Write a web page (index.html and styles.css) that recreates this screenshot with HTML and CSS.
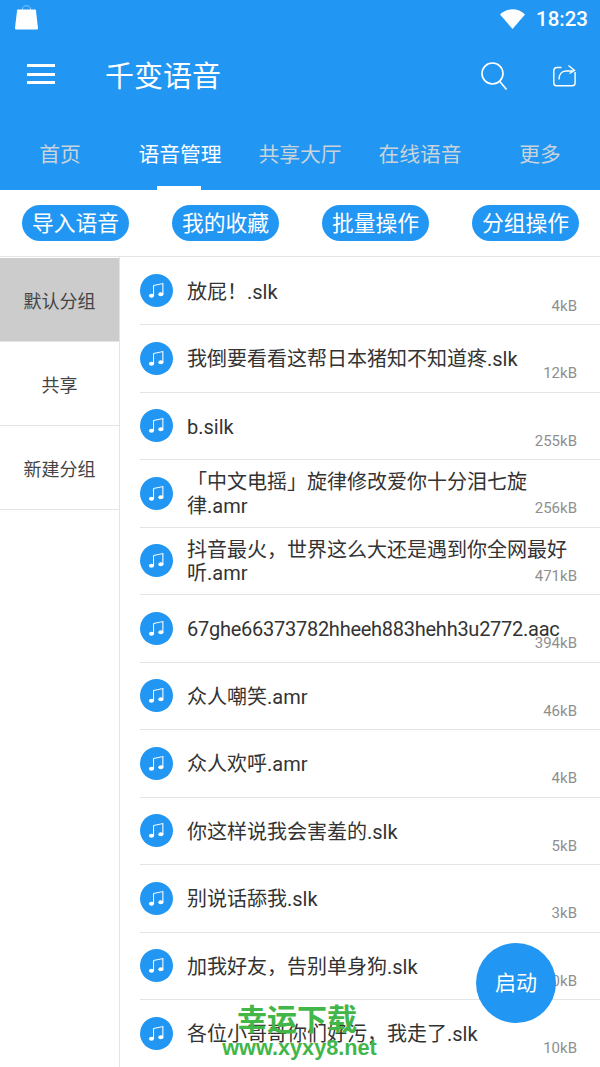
FILE: index.html
```html
<!DOCTYPE html>
<html lang="zh-CN">
<head>
	<meta charset="UTF-8">
	<title>千变语音</title>
	<link rel="stylesheet" href="styles.css">
</head>
<body>
	<div class="head">
		<div class="status">
			<svg class="bag" width="23" height="25" viewBox="0 0 23 25"><path d="M7.500 5V4C7.500 2 9 .7 11.500 .7S15.500 2 15.500 4v1" fill="none" stroke="#8cc6f5" stroke-width="1"/><path d="M3 4.500h17c.5 0 .8.300.9.800L23 23c0 1-.6 1.600-1.400 1.600H1.400C.6 24.600 0 24 0 23L2.100 5.300c.1-.5.400-.8.900-.8z" fill="#fff"/></svg>
			<div class="status-right">
				<svg width="25" height="20" viewBox="0 0 25 20"><path d="M0 5.500C3.500 2 8 .3 12.500 .3S21.500 2 25 5.500L12.500 20z" fill="#fff"/></svg>
				<span class="clock">18:23</span>
			</div>
		</div>
		<div class="toolbar">
			<div class="burger"><i></i><i></i><i></i></div>
			<div class="title">千变语音</div>
			<svg class="search" width="26" height="28" viewBox="0 0 26 28"><circle cx="11.500" cy="11.500" r="10.500" fill="none" stroke="#fff" stroke-width="1.600"/><path d="M18.800 19.500L25.500 27.500" stroke="#fff" stroke-width="1.600" fill="none"/></svg>
			<svg class="share" width="23" height="23" viewBox="0 0 23 23"><path d="M8.500 3.500H4C2 3.500 .8 4.700 .8 6.500v12.500c0 1.700 1 2.800 2.700 2.800h15.800c1.700 0 2.800-1.100 2.800-2.800V8" fill="none" stroke="#fff" stroke-width="1.400"/><path d="M6 15.500c0-5 2.500-8.500 7-8.500h7.500M15.500 1.500L21.500 6.500l-5 3" fill="none" stroke="#fff" stroke-width="1.400"/></svg>
		</div>
		<div class="tabs">
			<div class="tab">首页</div>
			<div class="tab on">语音管理</div>
			<div class="tab">共享大厅</div>
			<div class="tab">在线语音</div>
			<div class="tab">更多</div>
		</div>
	</div>

	<div class="actions">
		<span class="pill">导入语音</span>
		<span class="pill">我的收藏</span>
		<span class="pill">批量操作</span>
		<span class="pill">分组操作</span>
	</div>

	<div class="main">
		<div class="groups">
			<div class="group on">默认分组</div>
			<div class="group">共享</div>
			<div class="group">新建分组</div>
		</div>
		<ul class="files">
			<li><span class="ico"><svg viewBox="0 0 16 16"><use href="#note"/></svg></span><p>放屁！.slk</p><em>4kB</em></li>
			<li><span class="ico"><svg viewBox="0 0 16 16"><use href="#note"/></svg></span><p>我倒要看看这帮日本猪知不知道疼.slk</p><em>12kB</em></li>
			<li><span class="ico"><svg viewBox="0 0 16 16"><use href="#note"/></svg></span><p>b.silk</p><em>255kB</em></li>
			<li><span class="ico"><svg viewBox="0 0 16 16"><use href="#note"/></svg></span><p>「中文电摇」旋律修改爱你十分泪七旋律.amr</p><em>256kB</em></li>
			<li><span class="ico"><svg viewBox="0 0 16 16"><use href="#note"/></svg></span><p>抖音最火，世界这么大还是遇到你全网最好听.amr</p><em>471kB</em></li>
			<li><span class="ico"><svg viewBox="0 0 16 16"><use href="#note"/></svg></span><p class="tight">67ghe66373782hheeh883hehh3u2772.aac</p><em>394kB</em></li>
			<li><span class="ico"><svg viewBox="0 0 16 16"><use href="#note"/></svg></span><p>众人嘲笑.amr</p><em>46kB</em></li>
			<li><span class="ico"><svg viewBox="0 0 16 16"><use href="#note"/></svg></span><p>众人欢呼.amr</p><em>4kB</em></li>
			<li><span class="ico"><svg viewBox="0 0 16 16"><use href="#note"/></svg></span><p>你这样说我会害羞的.slk</p><em>5kB</em></li>
			<li><span class="ico"><svg viewBox="0 0 16 16"><use href="#note"/></svg></span><p>别说话舔我.slk</p><em>3kB</em></li>
			<li><span class="ico"><svg viewBox="0 0 16 16"><use href="#note"/></svg></span><p>加我好友，告别单身狗.slk</p><em>10kB</em></li>
			<li><span class="ico"><svg viewBox="0 0 16 16"><use href="#note"/></svg></span><p>各位小哥哥你们好污，我走了.slk</p><em>10kB</em></li>
		</ul>
	</div>

	<div class="fab">启动</div>
	<div class="mark">
		<div class="mark-cn">幸运下载</div>
		<div class="mark-url">www.xyxy8.net</div>
	</div>

	<svg class="defs" width="0" height="0">
		<symbol id="note" viewBox="0 0 16 16">
			<path d="M5.200 3.200L14 1.500v10" fill="none" stroke="#fff" stroke-width="1"/>
			<path d="M5.200 3.200v9.800" fill="none" stroke="#fff" stroke-width="1"/>
			<ellipse cx="3.300" cy="13" rx="2.400" ry="1.900" fill="#fff"/>
			<ellipse cx="12.100" cy="11.500" rx="2.400" ry="1.900" fill="#fff"/>
		</symbol>
	</svg>
</body>
</html>
```

FILE: styles.css
```css
* {
	margin: 0;
	padding: 0;
	box-sizing: border-box;
}
html, body {
	height: 1067px;
	overflow: hidden;
}
body {
	position: relative;
	background: #fff;
	font-family: "Roboto", "Noto Sans CJK SC", sans-serif;
}
ul {
	list-style: none;
}
.defs {
	position: absolute;
}

.head {
	height: 190px;
	background: #2196f3;
	color: #fff;
}
.status {
	height: 38px;
	padding: 5px 12px 0 15px;
	display: flex;
	justify-content: space-between;
	align-items: flex-start;
}
.status-right {
	display: flex;
	align-items: center;
	gap: 11px;
	padding-top: 2px;
}
.clock {
	font-size: 20.500px;
	font-weight: 500;
	line-height: 24px;
}
.toolbar {
	height: 76px;
	display: flex;
	align-items: center;
	padding-left: 27px;
}
.burger {
	width: 28px;
	display: flex;
	flex-direction: column;
	gap: 5.300px;
	margin-bottom: 4px;
}
.burger i {
	display: block;
	height: 3px;
	background: #fff;
}
.title {
	margin-left: 50px;
	margin-bottom: 4px;
	font-size: 29px;
	flex: 1;
}
.search {
	margin-right: 46px;
	margin-bottom: 1px;
}
.share {
	margin-right: 24px;
	margin-bottom: 1px;
}
.tabs {
	height: 76px;
	display: flex;
}
.tab {
	flex: 1;
	text-align: center;
	font-size: 20.800px;
	line-height: 82px;
	color: #c9d3db;
	position: relative;
}
.tab.on {
	color: #fff;
}
.tab.on::after {
	content: "";
	position: absolute;
	left: 37px;
	bottom: 0;
	width: 44px;
	height: 4px;
	background: #fff;
}

.actions {
	height: 67px;
	display: flex;
	justify-content: space-between;
	align-items: center;
	padding: 0 21px 0 22px;
	border-bottom: 1px solid #e4e4e4;
}
.pill {
	width: 107px;
	height: 36px;
	border-radius: 18px;
	background: #2196f3;
	color: #fff;
	font-size: 21.800px;
	line-height: 38px;
	text-align: center;
	white-space: nowrap;
}

.main {
	display: flex;
}
.groups {
	width: 120px;
	height: 810px;
	padding-top: 0.800px;
	border-right: 1px solid #e4e4e4;
	flex-shrink: 0;
}
.group {
	height: 84.200px;
	line-height: 88.400px;
	text-align: center;
	font-size: 18px;
	color: #444;
	border-bottom: 1px solid #e4e4e4;
}
.group.on {
	background: #ccc;
}
.files {
	flex: 1;
	padding: 0.500px 0 0 20px;
}
.files li {
	position: relative;
	height: 67.500px;
	display: flex;
	align-items: center;
	border-bottom: 1px solid #e4e4e4;
	padding-right: 20px;
}
.ico {
	width: 33px;
	height: 33px;
	border-radius: 50%;
	background: #2196f3;
	flex-shrink: 0;
	display: flex;
	align-items: center;
	justify-content: center;
	margin-right: 14px;
}
.ico svg {
	width: 17px;
	height: 17px;
}
.files p {
	margin-top: 3px;
	font-size: 20px;
	line-height: 23.500px;
	color: #333;
}
.files p.tight {
	letter-spacing: -0.260px;
	white-space: nowrap;
}
.files em {
	position: absolute;
	right: 23px;
	bottom: 10.500px;
	font-style: normal;
	font-size: 15px;
	line-height: 16px;
	color: #8f8f8f;
}

.fab {
	position: absolute;
	left: 476px;
	top: 943px;
	width: 80px;
	height: 80px;
	border-radius: 50%;
	background: #2196f3;
	color: #fff;
	font-size: 21px;
	line-height: 80px;
	text-align: center;
}
.mark {
	position: absolute;
	left: 212px;
	top: 1002px;
	width: 170px;
	text-align: center;
	color: #43b649;
	font-weight: 700;
}
.mark-cn {
	font-size: 30px;
	line-height: 36px;
}
.mark-url {
	font-family: "Liberation Sans", sans-serif;
	font-size: 21.700px;
	line-height: 24px;
	margin-top: -2px;
	padding-left: 5px;
}
```
